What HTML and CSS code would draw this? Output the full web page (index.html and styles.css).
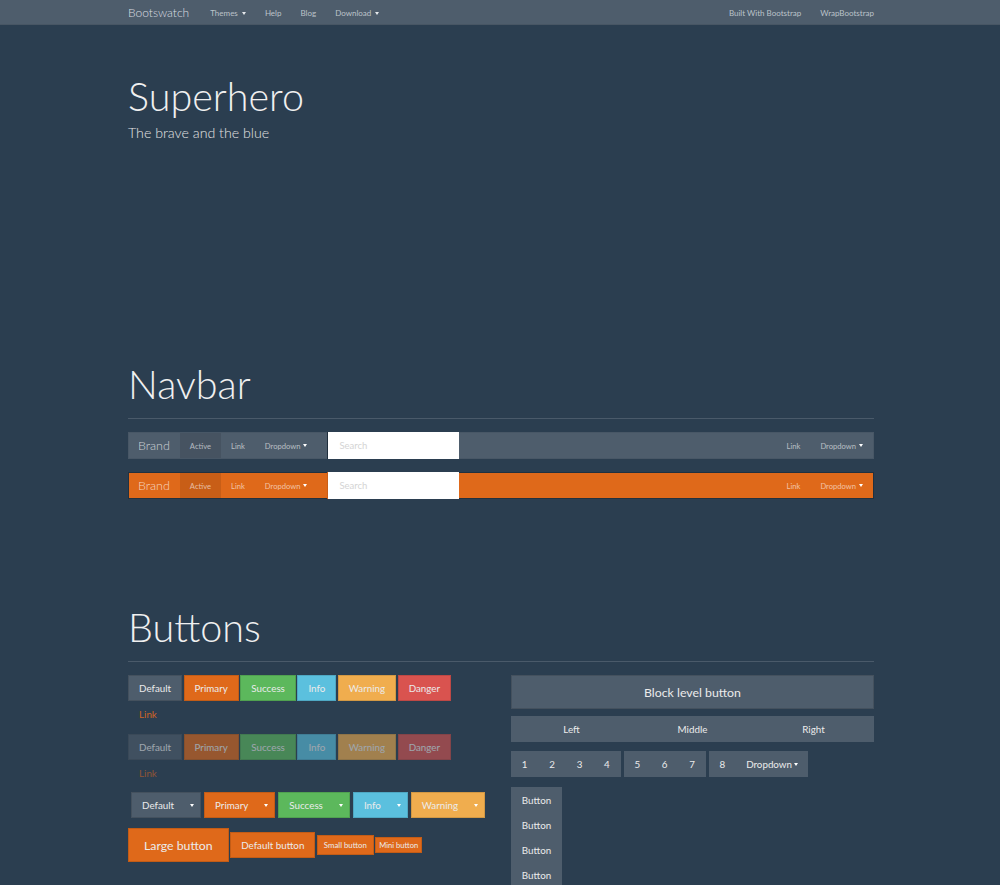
FILE: index.html
```html
<!DOCTYPE html>
<html>
<head>
<meta charset="utf-8">
<title>Superhero</title>
<link rel="stylesheet" href="styles.css">
</head>
<body>
<div class="topbar">
  <div class="topbar-inner">
    <span class="top-brand">Bootswatch</span>
    <nav class="top-nav">
      <span>Themes <i class="caret"></i></span>
      <span>Help</span>
      <span>Blog</span>
      <span>Download <i class="caret"></i></span>
    </nav>
    <nav class="top-nav right">
      <span>Built With Bootstrap</span>
      <span>WrapBootstrap</span>
    </nav>
  </div>
</div>

<main class="container">
  <header class="page-header">
    <h1 class="title">Superhero</h1>
    <p class="lead">The brave and the blue</p>
  </header>

  <section class="section section-navbar">
    <h2 class="section-title">Navbar</h2>
    <hr class="rule">
    <div class="navbar">
      <span class="nb-brand">Brand</span>
      <span class="nb-link active">Active</span>
      <span class="nb-link">Link</span>
      <span class="nb-link">Dropdown <i class="caret"></i></span>
      <span class="nb-search">Search</span>
      <div class="nb-right">
        <span class="nb-link">Link</span>
        <span class="nb-link">Dropdown <i class="caret"></i></span>
      </div>
    </div>
    <div class="navbar orange">
      <span class="nb-brand">Brand</span>
      <span class="nb-link active">Active</span>
      <span class="nb-link">Link</span>
      <span class="nb-link">Dropdown <i class="caret"></i></span>
      <span class="nb-search">Search</span>
      <div class="nb-right">
        <span class="nb-link">Link</span>
        <span class="nb-link">Dropdown <i class="caret"></i></span>
      </div>
    </div>
  </section>

  <section class="section section-buttons">
    <h2 class="section-title">Buttons</h2>
    <hr class="rule">
    <div class="cols">
      <div class="col">
        <div class="btn-row">
          <span class="btn">Default</span>
          <span class="btn primary">Primary</span>
          <span class="btn success">Success</span>
          <span class="btn info">Info</span>
          <span class="btn warning">Warning</span>
          <span class="btn danger">Danger</span>
        </div>
        <div class="btn-row"><span class="btn link">Link</span></div>
        <div class="btn-row disabled gap-top">
          <span class="btn">Default</span>
          <span class="btn primary">Primary</span>
          <span class="btn success">Success</span>
          <span class="btn info">Info</span>
          <span class="btn warning">Warning</span>
          <span class="btn danger">Danger</span>
        </div>
        <div class="btn-row disabled"><span class="btn link">Link</span></div>
        <div class="split-row">
          <div class="split"><span class="btn">Default</span><span class="btn caret-btn"><i class="caret"></i></span></div>
          <div class="split primary"><span class="btn primary">Primary</span><span class="btn primary caret-btn"><i class="caret"></i></span></div>
          <div class="split"><span class="btn success">Success</span><span class="btn success caret-btn"><i class="caret"></i></span></div>
          <div class="split"><span class="btn info">Info</span><span class="btn info caret-btn"><i class="caret"></i></span></div>
          <div class="split"><span class="btn warning">Warning</span><span class="btn warning caret-btn"><i class="caret"></i></span></div>
        </div>
        <div class="size-row">
          <span class="btn primary lg">Large button</span>
          <span class="btn primary">Default button</span>
          <span class="btn primary sm">Small button</span>
          <span class="btn primary xs">Mini button</span>
        </div>
      </div>
      <div class="col">
        <span class="btn block">Block level button</span>
        <div class="justified">
          <span class="btn">Left</span>
          <span class="btn">Middle</span>
          <span class="btn">Right</span>
        </div>
        <div class="toolbar">
          <div class="group"><span class="btn num">1</span><span class="btn num">2</span><span class="btn num">3</span><span class="btn num">4</span></div>
          <div class="group"><span class="btn num">5</span><span class="btn num">6</span><span class="btn num">7</span></div>
          <div class="group"><span class="btn num">8</span><span class="btn">Dropdown <i class="caret"></i></span></div>
        </div>
        <div class="vgroup">
          <span class="btn">Button</span>
          <span class="btn">Button</span>
          <span class="btn">Button</span>
          <span class="btn">Button</span>
        </div>
      </div>
    </div>
  </section>
</main>
</body>
</html>
```

FILE: styles.css
```css
* {
  box-sizing: border-box;
  margin: 0;
  padding: 0;
}

html, body {
  background: #2B3E50;
}

body {
  color: #EBEBEB;
  font-family: Lato, "Open Sans", "Liberation Sans", sans-serif;
  font-size: 10px;
  overflow: hidden;
  height: 885px;
}

.caret {
  display: inline-block;
  width: 0;
  height: 0;
  border-top: 3px solid #fff;
  border-left: 2.5px solid transparent;
  border-right: 2.5px solid transparent;
  margin-left: 2px;
  vertical-align: middle;
}

/* top bar */
.topbar {
  height: 25px;
  background: #4E5D6C;
  border-bottom: 1px solid #485664;
}

.topbar-inner {
  width: 746px;
  margin-left: 128px;
  height: 24px;
  display: flex;
  align-items: center;
}

.top-brand {
  font-size: 12px;
  font-weight: 300;
  color: #dadee2;
  margin-right: 21px;
  margin-top: 1px;
}

.top-nav {
  display: flex;
  gap: 19px;
  font-size: 8px;
  color: #bcc3ca;
  margin-top: 1px;
}

.top-nav.right {
  margin-left: auto;
}

.top-nav .caret {
  border-top-color: #e6e9ec;
}

/* page */
.container {
  width: 746px;
  margin-left: 128px;
}

.page-header {
  padding-top: 51px;
}

.title {
  font-size: 39.5px;
  line-height: 40px;
  font-weight: 300;
  color: #f0f0f0;
}

.lead {
  margin-top: 7px;
  font-size: 14.2px;
  line-height: 20px;
  font-weight: 300;
  color: #e3e3e3;
}

.section-title {
  font-size: 39.5px;
  line-height: 40px;
  font-weight: 300;
  color: #f0f0f0;
}

.section-navbar {
  margin-top: 221px;
}

.section-buttons {
  margin-top: 108px;
}

.rule {
  border: 0;
  height: 1px;
  background: #4a5a6a;
  margin-top: 14px;
}

/* navbar examples */
.navbar {
  display: flex;
  height: 27px;
  margin-top: 13px;
  background: #4E5D6C;
  border: 1px solid #485766;
}

.navbar.orange {
  background: #DF691A;
  border-color: #22313f;
}

.nb-brand {
  display: flex;
  align-items: center;
  padding: 0 10px 0 9px;
  font-size: 12.5px;
  font-weight: 300;
  color: rgba(255, 255, 255, 0.72);
}

.nb-link {
  display: flex;
  align-items: center;
  padding: 0 10px;
  font-size: 7.6px;
  color: rgba(255, 255, 255, 0.6);
}

.nb-link.active {
  background: rgba(0, 0, 0, 0.1);
}

.nb-link .caret {
  margin-left: 3px;
}

.nb-search {
  display: flex;
  align-items: center;
  width: 132px;
  margin: -1px 0 -1px 10px;
  padding-left: 11px;
  background: #fff;
  border-left: 1px solid #1f2e3c;
  font-size: 9.5px;
  color: #d4d4d4;
}

.orange .nb-search {
  border-left-color: #c95e17;
}

.nb-right {
  margin-left: auto;
  display: flex;
}

/* buttons */
.cols {
  display: grid;
  grid-template-columns: 363px 363px;
  column-gap: 20px;
  margin-top: 13px;
}

.btn {
  display: inline-flex;
  align-items: center;
  justify-content: center;
  height: 26px;
  padding: 0 10px;
  border: 1px solid rgba(0, 0, 0, 0.12);
  background: #4E5D6C;
  color: #ebebeb;
  font-size: 9.8px;
  white-space: nowrap;
}

.btn.primary { background: #DF691A; }
.btn.success { background: #5CB85C; }
.btn.info { background: #5BC0DE; }
.btn.warning { background: #F0AD4E; }
.btn.danger { background: #D9534F; }

.btn.link {
  background: transparent;
  border-color: transparent;
  color: #cf6424;
}

.btn-row {
  display: flex;
  gap: 1.5px;
}

.btn-row.gap-top {
  margin-top: 7px;
}

.btn-row.disabled .btn {
  opacity: 0.6;
}

.split-row {
  display: flex;
  gap: 3px;
  margin-top: 6px;
  margin-left: 3px;
}

.split {
  display: flex;
}

.split .btn:first-child {
  border-right: 0;
}

.split .caret-btn {
  padding: 0 6px;
  border-left: 0;
}

.split .caret-btn .caret {
  margin-left: 0;
}

.size-row {
  display: flex;
  align-items: center;
  gap: 1.5px;
  margin-top: 10px;
}

.btn.lg {
  height: 34px;
  padding: 0 15px;
  font-size: 12.3px;
}

.btn.sm {
  height: 20px;
  padding: 0 6px;
  font-size: 7.8px;
}

.btn.xs {
  height: 16px;
  padding: 0 3px;
  font-size: 7.6px;
}

.btn.block {
  display: flex;
  width: 100%;
  height: 34px;
  font-size: 12.3px;
}

.justified {
  display: grid;
  grid-template-columns: 1fr 1fr 1fr;
  margin-top: 7px;
}

.justified .btn {
  border: 0;
}

.toolbar {
  display: flex;
  gap: 3px;
  margin-top: 9px;
}

.group {
  display: flex;
}

.group .btn {
  border: 0;
}

.btn.num {
  width: 27.4px;
  padding: 0;
}

.group .caret {
  margin-left: 2px;
}

.vgroup {
  display: flex;
  flex-direction: column;
  width: 51px;
  margin-top: 10px;
}

.vgroup .btn {
  height: 25px;
  border: 0;
}
```
